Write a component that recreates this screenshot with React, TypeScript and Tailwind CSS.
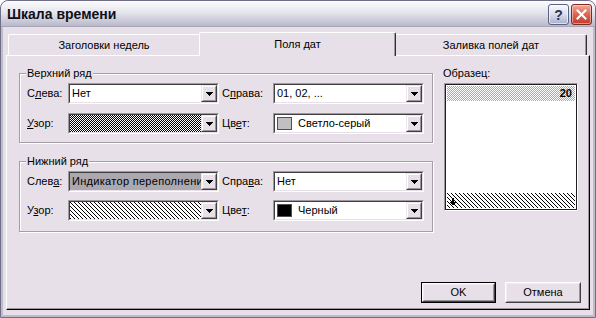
import React from "react";

function Arrow() {
  return (
    <svg width="7" height="4" viewBox="0 0 7 4" shapeRendering="crispEdges" className="block">
      <rect x="0" y="0" width="7" height="1" fill="#000" />
      <rect x="1" y="1" width="5" height="1" fill="#000" />
      <rect x="2" y="2" width="3" height="1" fill="#000" />
      <rect x="3" y="3" width="1" height="1" fill="#000" />
    </svg>
  );
}

function DropBtn() {
  return (
    <div className="flex h-full w-[16px] shrink-0 border border-t-[#ece6ec] border-l-[#ece6ec] border-b-[#404040] border-r-[#404040]">
      <div className="flex flex-1 items-center justify-center border border-t-white border-l-white border-b-[#9a929a] border-r-[#9a929a] bg-[#e8e0e8]">
        <Arrow />
      </div>
    </div>
  );
}

function Combo({ children, fieldClass = "bg-white" }: { children?: React.ReactNode; fieldClass?: string }) {
  return (
    <div className="flex h-[21px] w-[151px] shrink-0 border border-t-[#a098a0] border-l-[#a098a0] border-b-white border-r-white">
      <div className="flex min-w-0 flex-1 overflow-hidden border border-t-[#404040] border-l-[#404040] border-b-[#e8e0e8] border-r-[#e8e0e8] bg-white">
        <div className={`flex min-w-0 flex-1 items-center overflow-hidden whitespace-nowrap ${fieldClass}`}>{children}</div>
        <DropBtn />
      </div>
    </div>
  );
}

function Dither({ id, color, bg = "#fff" }: { id: string; color: string; bg?: string }) {
  return (
    <svg width="100%" height="100%" shapeRendering="crispEdges" className="block">
      <defs>
        <pattern id={id} width="2" height="2" patternUnits="userSpaceOnUse">
          <rect width="2" height="2" fill={bg} />
          <rect x="0" y="0" width="1" height="1" fill={color} />
          <rect x="1" y="1" width="1" height="1" fill={color} />
        </pattern>
      </defs>
      <rect width="100%" height="100%" fill={`url(#${id})`} />
    </svg>
  );
}

function Hatch({ id }: { id: string }) {
  return (
    <svg width="100%" height="100%" shapeRendering="crispEdges" className="block">
      <defs>
        <pattern id={id} width="4" height="4" patternUnits="userSpaceOnUse">
          <rect width="4" height="4" fill="#fff" />
          <rect x="0" y="0" width="1" height="1" fill="#000" />
          <rect x="1" y="1" width="1" height="1" fill="#000" />
          <rect x="2" y="2" width="1" height="1" fill="#000" />
          <rect x="3" y="3" width="1" height="1" fill="#000" />
        </pattern>
      </defs>
      <rect width="100%" height="100%" fill={`url(#${id})`} />
    </svg>
  );
}

function Swatch({ color }: { color: string }) {
  return <div className={`ml-[2px] h-[13px] w-[15px] shrink-0 border border-[#505050] ${color}`} />;
}

function Btn({ children, def = false }: { children: React.ReactNode; def?: boolean }) {
  const inner = (
    <div className="flex h-full w-full border border-t-white border-l-white border-b-[#404040] border-r-[#404040]">
      <div className="flex flex-1 items-center justify-center border border-t-[#f2ecf2] border-l-[#f2ecf2] border-b-[#9a929a] border-r-[#9a929a] bg-[#e8e0e8]">
        {children}
      </div>
    </div>
  );
  return def ? (
    <div className="h-[21px] w-[75px] border border-black">{inner}</div>
  ) : (
    <div className="h-[21px] w-[76px]">{inner}</div>
  );
}

function Group({
  title,
  children,
  className = "",
}: {
  title: string;
  children: React.ReactNode;
  className?: string;
}) {
  return (
    <div
      className={`relative w-[414px] border border-[#a69ea6] shadow-[1px_1px_0_#fff,inset_1px_1px_0_#fff] pl-[7px] ${className}`}
    >
      <span className="absolute left-[6px] top-[-7px] bg-[#e8e0e8] px-[1px] leading-[13px]">{title}</span>
      {children}
    </div>
  );
}

function Row({
  l1,
  c1,
  l2,
  c2,
}: {
  l1: React.ReactNode;
  c1: React.ReactNode;
  l2: React.ReactNode;
  c2: React.ReactNode;
}) {
  return (
    <div className="flex h-[21px] items-center">
      <div className="w-[41px] shrink-0">{l1}</div>
      {c1}
      <div className="w-[54px] shrink-0 pl-[3px]">{l2}</div>
      {c2}
    </div>
  );
}

export default function App() {
  return (
    <div className="h-[318px] w-[596px] overflow-hidden bg-white font-['Liberation_Sans',Arial,sans-serif] text-[11px] leading-[13px] text-black">
      <div className="flex h-full flex-col overflow-hidden rounded-t-[8px] border border-[#6e6e86] bg-[#e8e0e8]">
        {/* Title bar */}
        <div className="flex h-[26px] shrink-0 items-center rounded-t-[7px] border-b border-[#a6a6b8] bg-gradient-to-b from-[#fdfdfe] via-[#e2e2eb] to-[#b9b9ca] pl-[6px] pr-[3px]">
          <span className="flex-1 pt-[1px] text-[14px] font-bold text-[#101018]">Шкала времени</span>
          <div className="flex items-center gap-[2px] pt-[2px]">
            <div className="flex h-[21px] w-[21px] items-center justify-center rounded-[3px] border border-[#5c6280] bg-gradient-to-b from-[#fafbfe] via-[#d8dcec] to-[#a9b0cc] shadow-[inset_0_0_0_1px_rgba(255,255,255,0.6)]">
              <span className="text-[14px] font-bold leading-none text-[#2c3150]">?</span>
            </div>
            <div className="flex h-[21px] w-[21px] items-center justify-center rounded-[3px] border border-[#7c2a22] bg-gradient-to-b from-[#f2a899] via-[#dc6452] to-[#c03a28] shadow-[inset_0_0_0_1px_rgba(255,255,255,0.45)]">
              <svg width="11" height="11" viewBox="0 0 11 11">
                <path d="M1.5 1.5 L9.5 9.5 M9.5 1.5 L1.5 9.5" stroke="#fff" strokeWidth="2" strokeLinecap="square" />
              </svg>
            </div>
          </div>
        </div>

        {/* Body */}
        <div className="flex flex-1 flex-col border-x-2 border-b-2 border-[#bcbcca] px-[3px] pb-[5px] pt-[5px]">
          {/* Tabs */}
          <div className="flex h-[23px] shrink-0 items-end pl-[2px]">
            <div className="flex h-[21px] w-[191px] items-center justify-center rounded-tl-[2px] border-l border-t border-white pt-[1px]">
              Заголовки недель
            </div>
            <div className="relative z-10 -mb-[1px] flex h-[24px] w-[197px] items-start justify-center rounded-t-[2px] border-l border-t border-r border-l-white border-t-white border-r-[#303030] bg-[#e8e0e8] pt-[5px] shadow-[inset_-1px_0_0_#a098a0]">
              Поля дат
            </div>
            <div className="flex h-[21px] w-[191px] items-center justify-center rounded-tr-[2px] border-t border-r border-t-white border-r-[#303030] pt-[1px] shadow-[inset_-1px_0_0_#a098a0]">
              Заливка полей дат
            </div>
          </div>

          {/* Panel */}
          <div className="flex flex-1 flex-col border border-l-white border-t-white border-r-black border-b-black shadow-[inset_-1px_-1px_0_#a098a0]">
            <div className="flex">
              {/* left column */}
              <div className="flex flex-col pl-[12px] pt-[17px]">
                <Group title="Верхний ряд" className="pb-[8px] pt-[9px]">
                  <div className="flex flex-col gap-[9px]">
                    <Row
                      l1={<span>С<span className="underline">л</span>ева:</span>}
                      c1={<Combo><span className="pl-[2px]">Нет</span></Combo>}
                      l2={<span>С<span className="underline">п</span>рава:</span>}
                      c2={<Combo><span className="pl-[2px]">01, 02, ...</span></Combo>}
                    />
                    <Row
                      l1={<span><span className="underline">У</span>зор:</span>}
                      c1={<Combo><Dither id="d1" color="#000" /></Combo>}
                      l2={<span>Цв<span className="underline">е</span>т:</span>}
                      c2={
                        <Combo>
                          <Swatch color="bg-[#c0c0c0]" />
                          <span className="pl-[6px]">Светло-серый</span>
                        </Combo>
                      }
                    />
                  </div>
                </Group>
                <Group title="Нижний ряд" className="mt-[18px] pb-[10px] pt-[9px]">
                  <div className="flex flex-col gap-[8px]">
                    <Row
                      l1={<span>Слев<span className="underline">а</span>:</span>}
                      c1={
                        <Combo fieldClass="bg-[#aca8b0]">
                          <span className="shrink-0 pl-[2px] tracking-[0.3px]">Индикатор переполнения</span>
                        </Combo>
                      }
                      l2={<span>Спра<span className="underline">в</span>а:</span>}
                      c2={<Combo><span className="pl-[2px]">Нет</span></Combo>}
                    />
                    <Row
                      l1={<span>У<span className="underline">з</span>ор:</span>}
                      c1={<Combo><Hatch id="h1" /></Combo>}
                      l2={<span>Цве<span className="underline">т</span>:</span>}
                      c2={
                        <Combo>
                          <Swatch color="bg-black" />
                          <span className="pl-[6px]">Черный</span>
                        </Combo>
                      }
                    />
                  </div>
                </Group>
              </div>

              {/* right column */}
              <div className="ml-[10px] flex flex-col pt-[11px]">
                <span className="leading-[13px]">Образец:</span>
                <div className="ml-[1px] mt-[3px] h-[128px] w-[134px] border border-t-[#a098a0] border-l-[#a098a0] border-b-white border-r-white">
                  <div className="flex h-full w-full flex-col border border-[#202020] bg-white p-[1px]">
                    <div className="relative h-[15px] shrink-0">
                      <Dither id="d2" color="#a8a8a8" />
                      <span className="absolute right-[3px] top-[1px] text-[11px] font-bold leading-[13px]">20</span>
                    </div>
                    <div className="flex-1" />
                    <div className="relative h-[15px] shrink-0">
                      <Hatch id="h2" />
                      <svg width="6" height="8" viewBox="0 0 6 8" shapeRendering="crispEdges" className="absolute left-[3px] top-[5px]">
                        <rect x="2" y="0" width="2" height="4" fill="#000" />
                        <polygon points="0,4 6,4 3,8" fill="#000" />
                      </svg>
                    </div>
                  </div>
                </div>
              </div>
            </div>

            {/* buttons */}
            <div className="mt-auto flex justify-end gap-[9px] pb-[6px] pr-[8px]">
              <Btn def>OK</Btn>
              <Btn>Отмена</Btn>
            </div>
          </div>
        </div>
      </div>
    </div>
  );
}
